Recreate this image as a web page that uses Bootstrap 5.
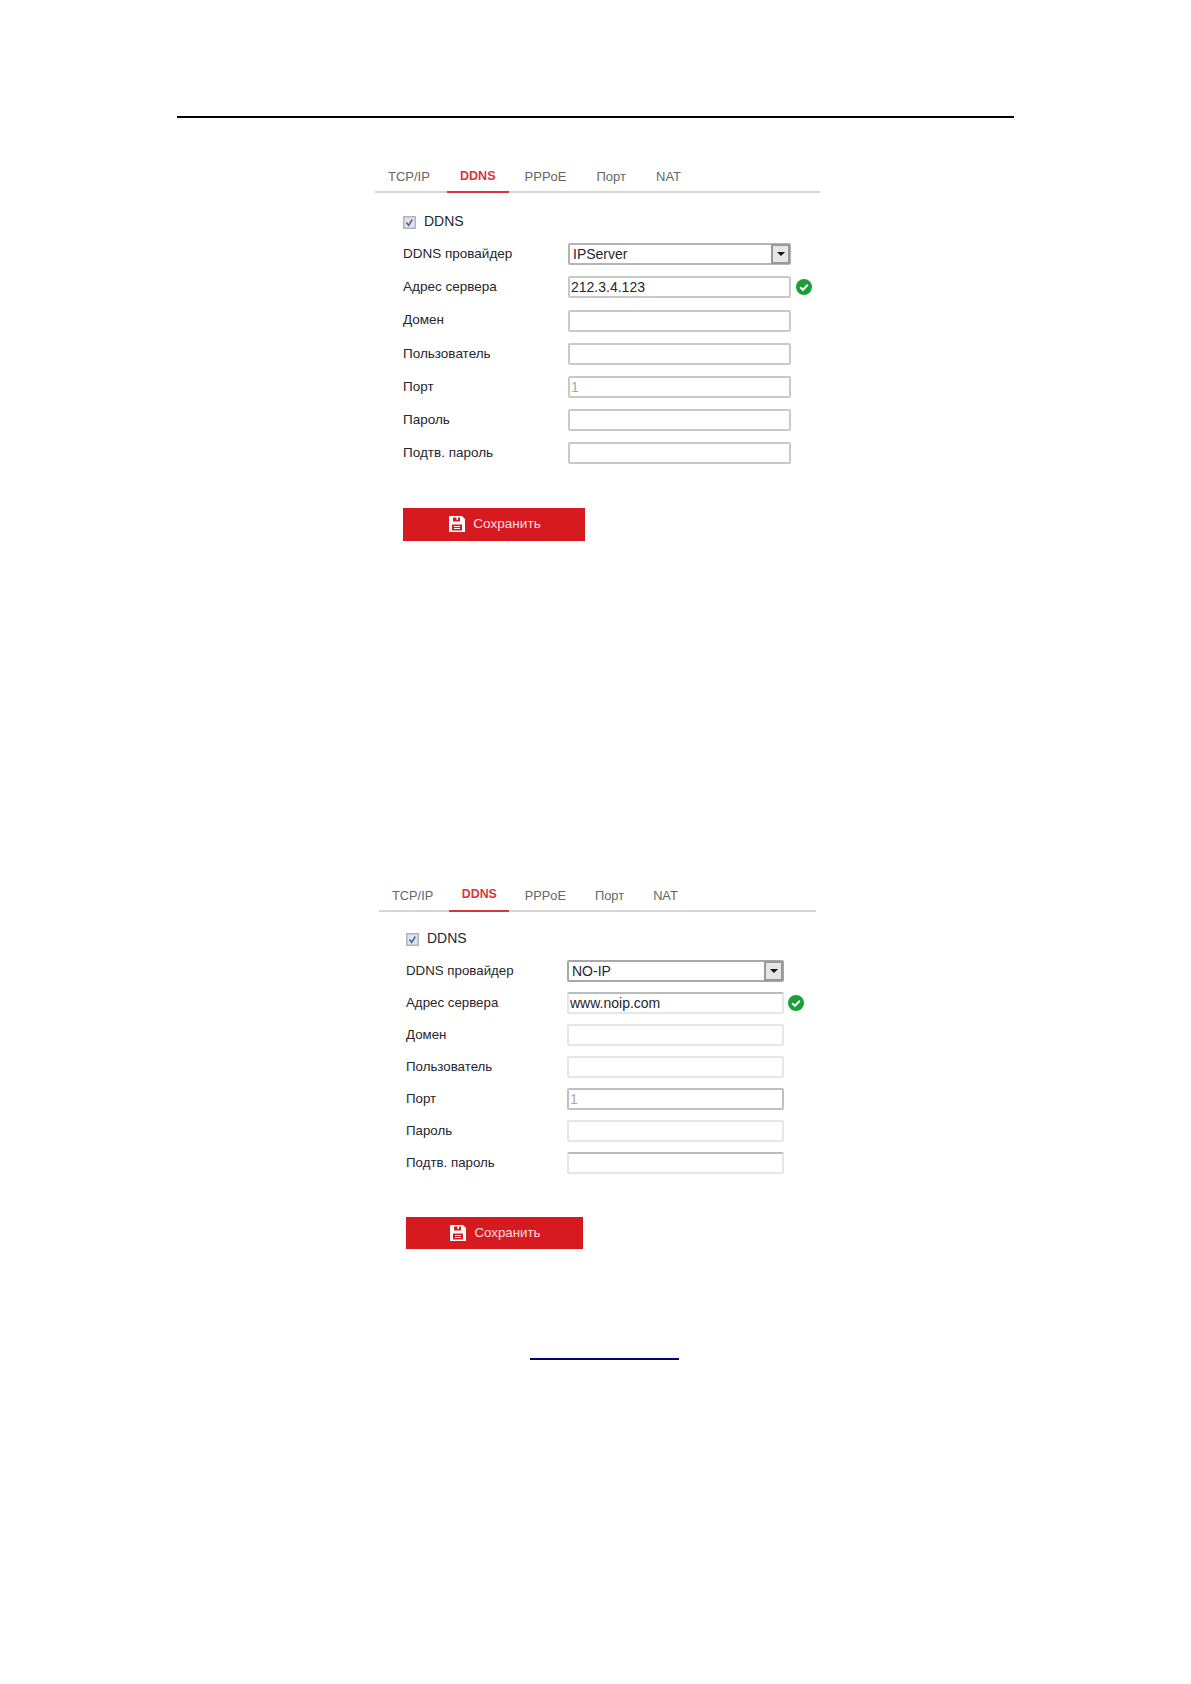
<!DOCTYPE html>
<html lang="ru">

<head>
    <meta charset="UTF-8" />
    <title>DDNS</title>
    <link href="https://cdn.jsdelivr.net/npm/bootstrap@5.3.3/dist/css/bootstrap.min.css" rel="stylesheet">
    <style>
        body { background: #fff; font-family: "Liberation Sans", Arial, sans-serif; color: #26262e; }
        .page-rule { height: 2px; margin: 116px 177px 0; background: #000; }

        .ddns-panel { --gap: 11.2px; --label-w: 165px; --field-w: 223px; --pad: 28px; --font: 13.5px; }
        .panel-one { margin: 41px 0 0 375px; width: 445px; }
        .panel-two { --gap: 10.1px; --label-w: 161px; --field-w: 217px; --pad: 27px; --font: 13.3px; margin: 337px 0 0 379px; width: 437px; }

        .tab-strip { height: 34px; gap: 2px; border-bottom: 2px solid #d6d6d6; flex-wrap: nowrap; }
        .tab-strip .nav-link { height: 34px; padding: 9px 14px 0; font-size: 13px; line-height: 18px; color: #666; }
        .tab-strip .nav-item:first-child .nav-link { padding-left: 13px; padding-right: 15px; }
        .tab-strip .nav-link.active { padding: 7.5px 13px 0; color: #d7373d; font-weight: 700; font-size: 12.6px; border-bottom: 2px solid #d7373d; }
        .panel-two .tab-strip .nav-link { padding-left: 13.3px; padding-right: 13.8px; font-size: 12.8px; }
        .panel-two .tab-strip .nav-item:first-child .nav-link { padding-left: 13px; padding-right: 14px; }
        .panel-two .tab-strip .nav-link.active { padding-top: 7px; padding-left: 12.5px; padding-right: 12.5px; font-size: 12.4px; }

        .ddns-form { padding-left: var(--pad); display: flex; flex-direction: column; gap: var(--gap); }
        .check-row { margin: 20px 0 2px; height: 17px; gap: 9px; font-size: 14px; line-height: 17px; }
        .panel-two .check-row { margin: 18px 0 3px; gap: 9px; font-size: 14px; }
        .check-mark { margin-top: 2px; margin-right: -1px; }
        .field-row { height: 22px; font-size: var(--font); }
        .field-label { width: var(--label-w); flex: none; }
        .field-box { position: relative; width: var(--field-w); flex: none; }
        .field-box .form-control,
        .field-box .form-select { height: 22px; min-height: 0; padding: 0 1px; border: 2px solid #c9c9c9; border-radius: 2px; background-image: none; font-size: 14px; line-height: 18px; color: #26262e; }
        .field-box .form-control:disabled { background: #fff; color: #aaa; }
        .field-box .form-select { border-color: #b5b5b5; padding-left: 3px; }
        .panel-two .field-box .form-select { border-color: #a8a8a8; }
        .select-arrow { position: absolute; top: 1px; right: 1px; width: 19px; height: 20px; background: #e6e6e6; border: 2px solid #999; display: flex; align-items: center; justify-content: center; pointer-events: none; }
        .select-arrow::before { content: ""; border-style: solid; border-width: 4px 4px 0; border-color: #111 transparent transparent; }
        .panel-two .field-box .form-control { border-color: #e6e6ea; }
        .panel-two .field-box .edge-mid { border-color: #bbb #e6e6ea #e6e6ea; }
        .panel-two .field-box .edge-dark { border-color: #c0c0c0; }
        .ok-mark { margin-left: 5px; flex: none; }
        .panel-two .ok-mark { margin-left: 4px; }

        .save-btn { width: 182px; height: 33px; margin-top: 32px; padding: 0 0 0 2px; gap: 8px; background: #d71920; border: 0; border-radius: 0; color: #fbdfe0; font-size: 13.6px; }
        .save-btn:hover { background: #d71920; color: #fbdfe0; }
        .panel-two .save-btn { width: 177px; height: 32px; margin-top: 33px; font-size: 13.3px; }

        .link-rule { width: 149px; height: 2px; margin: 109px 0 0 530px; background: #000080; }
    </style>
</head>

<body>

    <div class="page-rule"></div>

    <!-- Первый снимок: IPServer -->
    <section class="ddns-panel panel-one">
        <ul class="nav tab-strip">
            <li class="nav-item"><a class="nav-link" href="#">TCP/IP</a></li>
            <li class="nav-item"><a class="nav-link active" href="#">DDNS</a></li>
            <li class="nav-item"><a class="nav-link" href="#">PPPoE</a></li>
            <li class="nav-item"><a class="nav-link" href="#">Порт</a></li>
            <li class="nav-item"><a class="nav-link" href="#">NAT</a></li>
        </ul>
        <form class="ddns-form">
            <div class="d-flex align-items-center check-row">
                <svg class="check-mark" width="13" height="13" viewBox="0 0 13 13"><rect x=".75" y=".75" width="11.5" height="11.5" fill="#dfe3ee" stroke="#b4b4b4" stroke-width="1.5"/><path d="M3.5 6.5l2.2 3 3.6-6" fill="none" stroke="#4a5fa5" stroke-width="1.5"/></svg>
                <span>DDNS</span>
            </div>
            <div class="d-flex align-items-center field-row">
                <span class="field-label">DDNS провайдер</span>
                <div class="field-box">
                    <select class="form-select"><option>IPServer</option></select>
                    <span class="select-arrow"></span>
                </div>
            </div>
            <div class="d-flex align-items-center field-row">
                <span class="field-label">Адрес сервера</span>
                <div class="field-box"><input class="form-control" type="text" value="212.3.4.123"></div>
                <svg class="ok-mark" width="16" height="16" viewBox="0 0 16 16"><circle cx="8" cy="8" r="8" fill="#1a9e35"/><path d="M4.2 8.2l2.7 2.6 4.9-5" fill="none" stroke="#fff" stroke-width="2"/></svg>
            </div>
            <div class="d-flex align-items-center field-row">
                <span class="field-label">Домен</span>
                <div class="field-box"><input class="form-control" type="text"></div>
            </div>
            <div class="d-flex align-items-center field-row">
                <span class="field-label">Пользователь</span>
                <div class="field-box"><input class="form-control" type="text"></div>
            </div>
            <div class="d-flex align-items-center field-row">
                <span class="field-label">Порт</span>
                <div class="field-box"><input class="form-control" type="text" value="1" disabled></div>
            </div>
            <div class="d-flex align-items-center field-row">
                <span class="field-label">Пароль</span>
                <div class="field-box"><input class="form-control" type="password"></div>
            </div>
            <div class="d-flex align-items-center field-row">
                <span class="field-label">Подтв. пароль</span>
                <div class="field-box"><input class="form-control" type="password"></div>
            </div>
            <button type="button" class="btn d-flex align-items-center justify-content-center save-btn">
                <svg width="16" height="16" viewBox="0 0 16 16"><path fill="#fff" fill-rule="evenodd" d="M0 0h13l3 3v13H0zM4 1.5v4h7v-4h-2v2.5H7.5V1.5zM3 8.5v6h10v-6zM5 10h6v1H5zM5 12h6v1H5z"/></svg>
                <span>Сохранить</span>
            </button>
        </form>
    </section>

    <!-- Второй снимок: NO-IP -->
    <section class="ddns-panel panel-two">
        <ul class="nav tab-strip">
            <li class="nav-item"><a class="nav-link" href="#">TCP/IP</a></li>
            <li class="nav-item"><a class="nav-link active" href="#">DDNS</a></li>
            <li class="nav-item"><a class="nav-link" href="#">PPPoE</a></li>
            <li class="nav-item"><a class="nav-link" href="#">Порт</a></li>
            <li class="nav-item"><a class="nav-link" href="#">NAT</a></li>
        </ul>
        <form class="ddns-form">
            <div class="d-flex align-items-center check-row">
                <svg class="check-mark" width="13" height="13" viewBox="0 0 13 13"><rect x=".75" y=".75" width="11.5" height="11.5" fill="#dfe3ee" stroke="#b4b4b4" stroke-width="1.5"/><path d="M3.5 6.5l2.2 3 3.6-6" fill="none" stroke="#4a5fa5" stroke-width="1.5"/></svg>
                <span>DDNS</span>
            </div>
            <div class="d-flex align-items-center field-row">
                <span class="field-label">DDNS провайдер</span>
                <div class="field-box">
                    <select class="form-select"><option>NO-IP</option></select>
                    <span class="select-arrow"></span>
                </div>
            </div>
            <div class="d-flex align-items-center field-row">
                <span class="field-label">Адрес сервера</span>
                <div class="field-box"><input class="form-control edge-mid" type="text" value="www.noip.com"></div>
                <svg class="ok-mark" width="16" height="16" viewBox="0 0 16 16"><circle cx="8" cy="8" r="8" fill="#1a9e35"/><path d="M4.2 8.2l2.7 2.6 4.9-5" fill="none" stroke="#fff" stroke-width="2"/></svg>
            </div>
            <div class="d-flex align-items-center field-row">
                <span class="field-label">Домен</span>
                <div class="field-box"><input class="form-control" type="text"></div>
            </div>
            <div class="d-flex align-items-center field-row">
                <span class="field-label">Пользователь</span>
                <div class="field-box"><input class="form-control" type="text"></div>
            </div>
            <div class="d-flex align-items-center field-row">
                <span class="field-label">Порт</span>
                <div class="field-box"><input class="form-control edge-dark" type="text" value="1" disabled></div>
            </div>
            <div class="d-flex align-items-center field-row">
                <span class="field-label">Пароль</span>
                <div class="field-box"><input class="form-control" type="password"></div>
            </div>
            <div class="d-flex align-items-center field-row">
                <span class="field-label">Подтв. пароль</span>
                <div class="field-box"><input class="form-control edge-mid" type="password"></div>
            </div>
            <button type="button" class="btn d-flex align-items-center justify-content-center save-btn">
                <svg width="16" height="16" viewBox="0 0 16 16"><path fill="#fff" fill-rule="evenodd" d="M0 0h13l3 3v13H0zM4 1.5v4h7v-4h-2v2.5H7.5V1.5zM3 8.5v6h10v-6zM5 10h6v1H5zM5 12h6v1H5z"/></svg>
                <span>Сохранить</span>
            </button>
        </form>
    </section>

    <div class="link-rule"></div>

    <script src="https://cdn.jsdelivr.net/npm/bootstrap@5.3.3/dist/js/bootstrap.bundle.min.js"></script>
</body>

</html>
